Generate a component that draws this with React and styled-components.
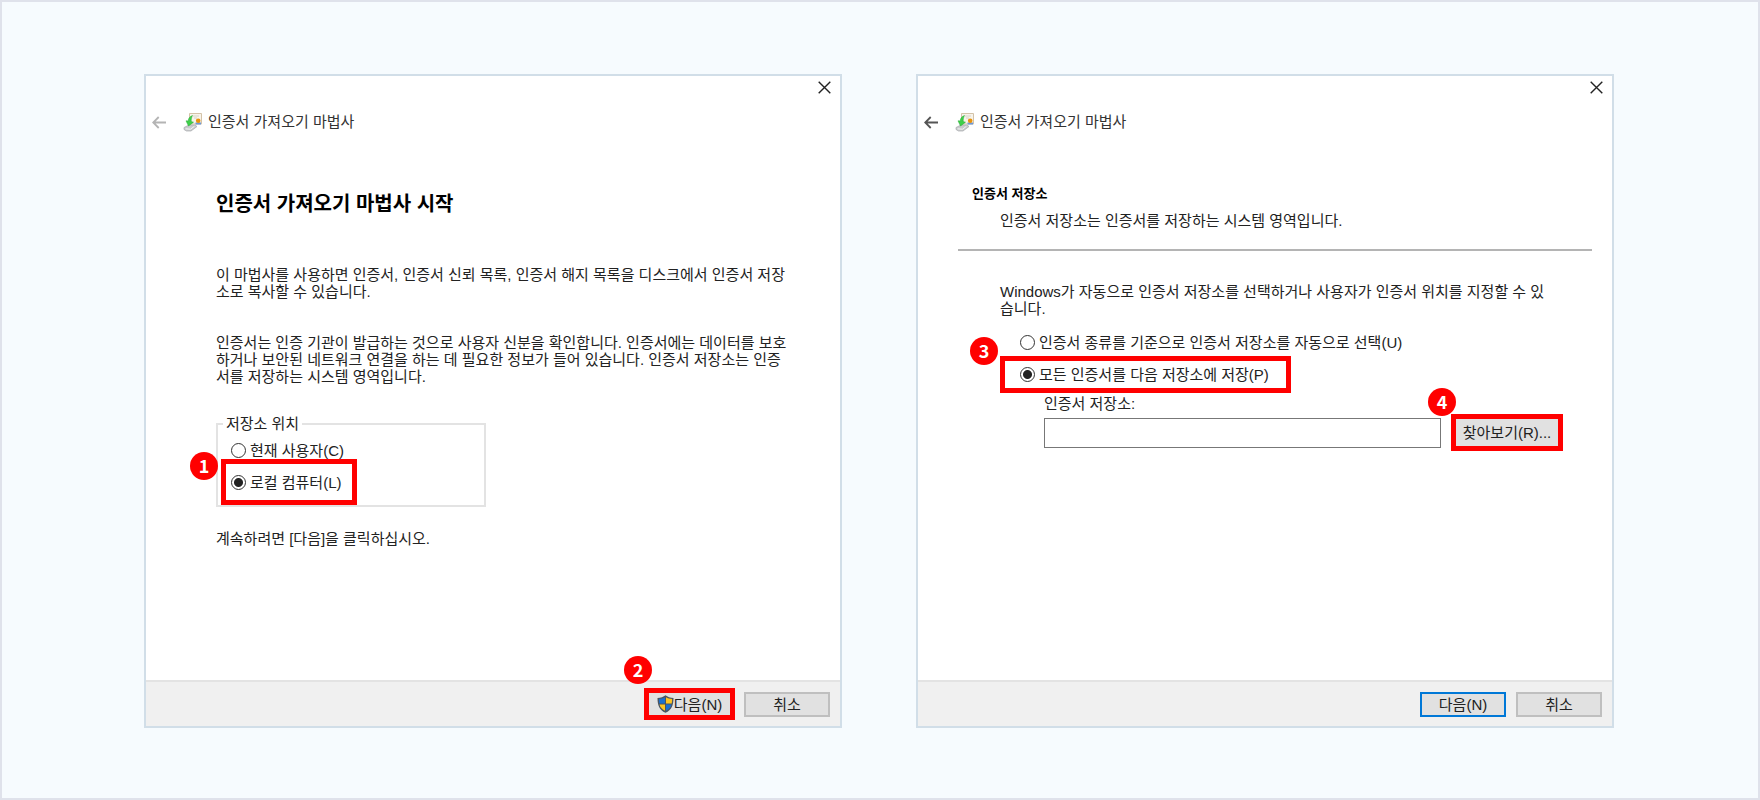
import React, { useState } from "react";
import styled, { createGlobalStyle, css } from "styled-components";

const GlobalStyle = createGlobalStyle`
    * {
        box-sizing: border-box;
    }
    body {
        margin: 0;
        background: #f6fbfe;
        color: #222;
        font-family: "Liberation Sans", "Noto Sans CJK KR", sans-serif;
        font-size: 15px;
        line-height: 17px;
    }
    button,
    input {
        font: inherit;
        color: inherit;
    }
    h1,
    h2,
    p {
        margin: 0;
    }
`;

function WizardIcon() {
    return (
        <svg width="20" height="20" viewBox="0 0 20 20" aria-hidden="true">
            <path d="M6.500 1.500H18.500v10.500H6.500z" fill="#f7f3ea" stroke="#d3c2a8" />
            <path d="M10 4h6M11 6h3" stroke="#d6d2c8" />
            <path d="M12.500 10.500h5.500v2h-5.500z" fill="#6d98d6" />
            <circle cx="15.200" cy="8.800" r="2.300" fill="#e8930c" />
            <path
                d="M1 15.500l5-2.500h6l2 1.500-6 4.500H3.500L1 17.500z"
                fill="#c9cbcd"
                stroke="#a6a9ac"
                strokeWidth=".7"
            />
            <path d="M2.500 16.800l5 .4 4-3" stroke="#f4f4f4" fill="none" />
            <path
                d="M9.500 3.500C7 4.300 5.300 6.300 5.200 9L3 8.800 5.500 14l5-3.800-2.300-.6c-.1-2.400.3-4.300 1.300-6.100z"
                fill="#3fd04a"
                stroke="#24a832"
                strokeWidth=".5"
            />
        </svg>
    );
}

function ShieldIcon() {
    return (
        <svg width="17" height="18" viewBox="0 0 17 18" aria-hidden="true">
            <path
                d="M8.500.2C6.500 1.800 3.700 2.800.5 3c0 7 1.700 12 8 14.800 6.300-2.800 8-7.800 8-14.800-3.200-.2-6-1.200-8-2.800z"
                fill="#4a5460"
            />
            <path d="M8 2.300v6.200H2.300C2 7 1.900 5.700 1.900 4.100 4.200 3.900 6.300 3.300 8 2.300z" fill="#1a70cf" />
            <path d="M9 2.300v6.200h5.700c.3-1.500.4-2.800.4-4.400-2.300-.2-4.400-.8-6.100-1.800z" fill="#fcc41f" />
            <path d="M8 9.400v6.400c-3.200-1.600-4.800-3.700-5.500-6.400z" fill="#fcc41f" />
            <path d="M9 9.400v6.400c3.200-1.600 4.800-3.700 5.500-6.400z" fill="#1a70cf" />
        </svg>
    );
}

function WizardWindow({ canGoBack, footer, children }) {
    return (
        <Window>
            <CloseRow>
                <IconButton aria-label="닫기">
                    <svg width="13" height="13" viewBox="0 0 13 13">
                        <path d="M.7.7l11.600 11.600M12.300.7L.7 12.300" stroke="#222" strokeWidth="1.400" />
                    </svg>
                </IconButton>
            </CloseRow>
            <TitleBar>
                <IconButton aria-label="뒤로" disabled={!canGoBack}>
                    <svg width="15" height="13" viewBox="0 0 15 13">
                        <path
                            d="M14 6.500H1.200M6.700 1L1.200 6.500l5.500 5.500"
                            fill="none"
                            stroke={canGoBack ? "#555" : "#b4b4b4"}
                            strokeWidth="1.800"
                        />
                    </svg>
                </IconButton>
                <WizardIcon />
                <Title>인증서 가져오기 마법사</Title>
            </TitleBar>
            {children}
            <Footer>{footer}</Footer>
        </Window>
    );
}

function App() {
    const [location, setLocation] = useState("local");
    const [store, setStore] = useState("custom");
    const [path, setPath] = useState("");

    return (
        <>
            <GlobalStyle />
            <Page>
                <WizardWindow
                    footer={
                        <>
                            <Marked>
                                <Badge>2</Badge>
                                <FooterButton $marked>
                                    <ShieldIcon />
                                    다음(N)
                                </FooterButton>
                            </Marked>
                            <FooterButton>취소</FooterButton>
                        </>
                    }
                >
                    <StartBody>
                        <Heading>인증서 가져오기 마법사 시작</Heading>
                        <Paragraph>
                            이 마법사를 사용하면 인증서, 인증서 신뢰 목록, 인증서 해지 목록을 디스크에서 인증서 저장
                            <br />
                            소로 복사할 수 있습니다.
                        </Paragraph>
                        <Paragraph>
                            인증서는 인증 기관이 발급하는 것으로 사용자 신분을 확인합니다. 인증서에는 데이터를 보호
                            <br />
                            하거나 보안된 네트워크 연결을 하는 데 필요한 정보가 들어 있습니다. 인증서 저장소는 인증
                            <br />
                            서를 저장하는 시스템 영역입니다.
                        </Paragraph>
                        <LocationGroup>
                            <Legend>저장소 위치</Legend>
                            <Option>
                                <Radio
                                    name="location"
                                    checked={location === "user"}
                                    onChange={() => setLocation("user")}
                                />
                                현재 사용자(C)
                            </Option>
                            <Marked>
                                <Badge>1</Badge>
                                <Option $marked>
                                    <Radio
                                        name="location"
                                        checked={location === "local"}
                                        onChange={() => setLocation("local")}
                                    />
                                    로컬 컴퓨터(L)
                                </Option>
                            </Marked>
                        </LocationGroup>
                        <p>계속하려면 [다음]을 클릭하십시오.</p>
                    </StartBody>
                </WizardWindow>

                <WizardWindow
                    canGoBack
                    footer={
                        <>
                            <FooterButton $primary>다음(N)</FooterButton>
                            <FooterButton>취소</FooterButton>
                        </>
                    }
                >
                    <StoreBody>
                        <StoreHeader>
                            <SubHeading>인증서 저장소</SubHeading>
                            <SubText>인증서 저장소는 인증서를 저장하는 시스템 영역입니다.</SubText>
                        </StoreHeader>
                        <StoreContent>
                            <p>
                                Windows가 자동으로 인증서 저장소를 선택하거나 사용자가 인증서 위치를 지정할 수 있
                                <br />
                                습니다.
                            </p>
                            <StoreOptions>
                                <Option>
                                    <Radio
                                        name="store"
                                        checked={store === "auto"}
                                        onChange={() => setStore("auto")}
                                    />
                                    인증서 종류를 기준으로 인증서 저장소를 자동으로 선택(U)
                                </Option>
                                <Marked>
                                    <Badge>3</Badge>
                                    <Option $marked $wide>
                                        <Radio
                                            name="store"
                                            checked={store === "custom"}
                                            onChange={() => setStore("custom")}
                                        />
                                        모든 인증서를 다음 저장소에 저장(P)
                                    </Option>
                                </Marked>
                            </StoreOptions>
                            <PathField>
                                <label htmlFor="store-path">인증서 저장소:</label>
                                <PathRow>
                                    <PathInput
                                        id="store-path"
                                        value={path}
                                        onChange={(e) => setPath(e.target.value)}
                                    />
                                    <Marked>
                                        <Badge>4</Badge>
                                        <BrowseButton>찾아보기(R)...</BrowseButton>
                                    </Marked>
                                </PathRow>
                            </PathField>
                        </StoreContent>
                    </StoreBody>
                </WizardWindow>
            </Page>
        </>
    );
}

export default App;

const marked = css`
    border: 5px solid #ff0000;
`;
const Page = styled.main`
    min-height: 100vh;
    padding: 72px 144px 70px 142px;
    border: 2px solid #dfe2eb;
    display: grid;
    grid-template-columns: repeat(2, minmax(0, 1fr));
    gap: 74px;
`;
const Window = styled.section`
    display: flex;
    flex-direction: column;
    background: #fff;
    border: 2px solid #d1dee8;
`;
const CloseRow = styled.div`
    display: flex;
    justify-content: flex-end;
    padding: 5px 9px 0 0;
`;
const IconButton = styled.button`
    display: flex;
    padding: 0;
    border: none;
    background: none;
`;
const TitleBar = styled.header`
    display: flex;
    align-items: center;
    padding: 17px 6px 0;
    svg {
        display: block;
    }
    ${IconButton} {
        margin-right: 16px;
    }
`;
const Title = styled.h1`
    margin-left: 5px;
    font-size: 15px;
    font-weight: 400;
    line-height: 22px;
    color: #333;
`;
const StartBody = styled.div`
    flex: 1;
    display: flex;
    flex-direction: column;
    align-items: flex-start;
    padding: 57px 20px 0 70px;
    white-space: nowrap;
`;
const Heading = styled.h2`
    margin-bottom: 48px;
    font-size: 20px;
    font-weight: 700;
    line-height: 28px;
    color: #000;
`;
const Paragraph = styled.p`
    margin-bottom: 34px;
    & + fieldset {
        margin-top: -4px;
    }
`;
const LocationGroup = styled.fieldset`
    width: 270px;
    min-width: 0;
    margin: 0 0 23px;
    padding: 9px 3px 0;
    border: 2px solid #e3e3e3;
`;
const Legend = styled.legend`
    margin-left: 2px;
    padding: 0 3px;
`;
const Marked = styled.div`
    position: relative;
    width: fit-content;
`;
const Badge = styled.span`
    position: absolute;
    top: -32px;
    left: -20px;
    width: 28px;
    height: 28px;
    border-radius: 50%;
    background: #ff0000;
    color: #fff;
    font-family: "Noto Sans CJK KR", sans-serif;
    font-size: 18px;
    font-weight: 700;
    line-height: 26px;
    text-align: center;
    ${LocationGroup} & {
        top: -7px;
        left: -31px;
    }
`;
const Option = styled.label`
    display: flex;
    align-items: center;
    gap: 4px;
    padding-left: 10px;
    height: 18px;
    ${(props) =>
        props.$marked &&
        css`
            ${marked}
            height: ${props.$wide ? 37 : 46}px;
            padding: 0 ${props.$wide ? 17 : 10}px 0 ${props.$wide ? 15 : 5}px;
        `}
`;
const Radio = styled.input.attrs({ type: "radio" })`
    appearance: none;
    flex: none;
    width: 15px;
    height: 15px;
    margin: 0;
    border: 1px solid #333;
    border-radius: 50%;
    background: #fff;
    &:checked {
        background: radial-gradient(circle, #222 4px, #fff 5px);
    }
`;
const StoreBody = styled.div`
    flex: 1;
    padding: 52px 20px 0 40px;
    white-space: nowrap;
`;
const StoreHeader = styled.div`
    padding: 0 0 20px 14px;
    border-bottom: 2px solid #b4b4b4;
`;
const SubHeading = styled.h2`
    font-size: 13px;
    font-weight: 700;
    line-height: 17px;
    color: #000;
`;
const SubText = styled.p`
    margin: 10px 0 0 28px;
`;
const StoreContent = styled.div`
    padding: 32px 0 0 42px;
`;
const StoreOptions = styled.div`
    padding-top: 16px;
    > ${Option} {
        margin-bottom: 5px;
        padding-left: 20px;
    }
    ${Badge} {
        top: -19px;
        left: -30px;
    }
`;
const PathField = styled.div`
    padding: 2px 29px 0 44px;
`;
const PathRow = styled.div`
    display: flex;
    align-items: center;
    gap: 10px;
    margin-top: 2px;
    ${Badge} {
        top: -26px;
        left: -23px;
    }
`;
const PathInput = styled.input`
    flex: 1;
    min-width: 0;
    height: 30px;
    padding: 0 6px;
    border: 1px solid #777;
    background: #fff;
`;
const BrowseButton = styled.button`
    ${marked}
    width: 112px;
    height: 37px;
    padding: 0;
    background: #e1e1e1;
`;
const Footer = styled.footer`
    display: flex;
    justify-content: flex-end;
    align-items: center;
    gap: 10px;
    height: 46px;
    padding-right: 10px;
    border-top: 2px solid #e3e3e3;
    background: #f0f0f0;
    ${Marked} {
        margin-right: -1px;
    }
`;
const FooterButton = styled.button`
    display: flex;
    align-items: center;
    justify-content: center;
    width: 86px;
    height: 25px;
    padding: 0;
    border: 2px solid ${(props) => (props.$primary ? "#0078d7" : "#bfbfbf")};
    background: #e1e1e1;
    ${(props) =>
        props.$marked &&
        css`
            ${marked}
            width: 91px;
            height: 32px;
        `}
`;
